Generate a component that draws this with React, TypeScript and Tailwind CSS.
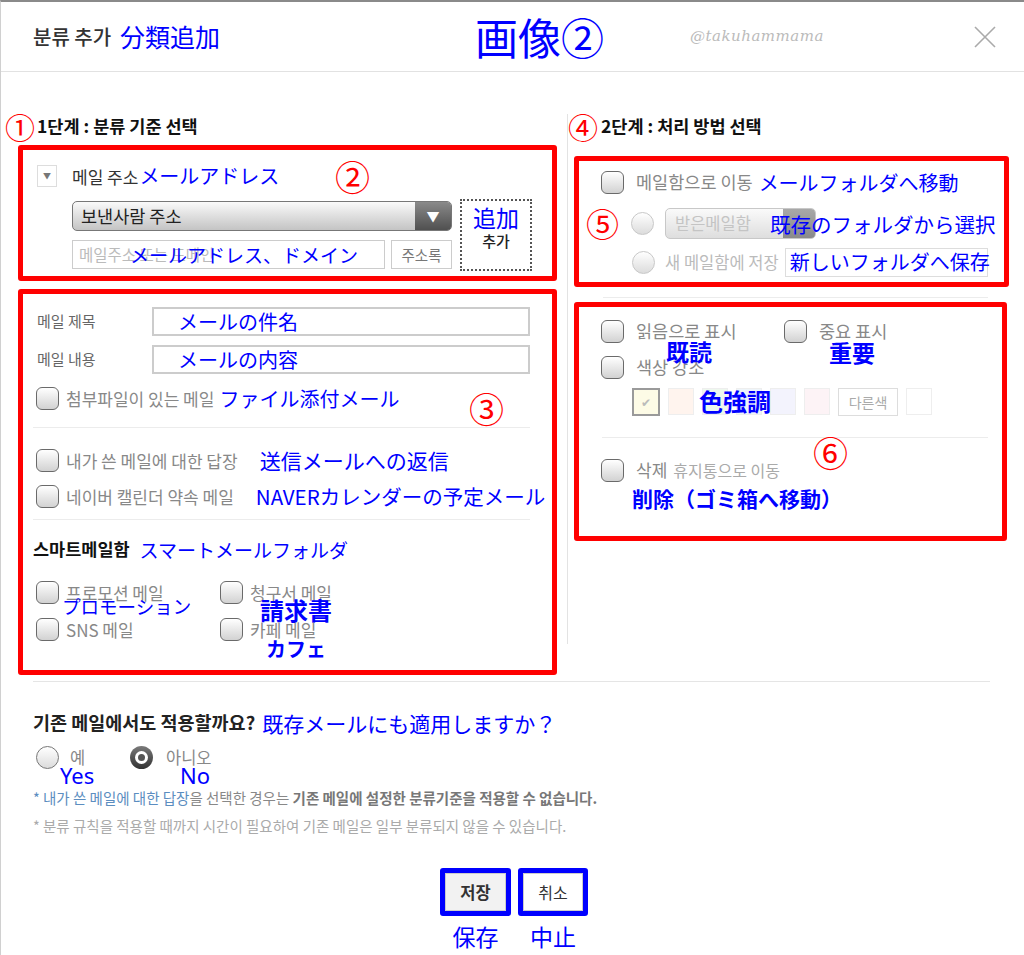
import React from 'react';

// 注釈（青い日本語テキスト）
const jp = "font-['Noto_Sans_CJK_JP',sans-serif] text-[#0000ff] leading-none whitespace-nowrap";
const red = "font-['Noto_Sans_CJK_JP',sans-serif] text-[#ff0000] leading-none";

const Checkbox = ({ light = false }: { light?: boolean }) => (
  <span
    className={`inline-block w-[23px] h-[23px] shrink-0 rounded-[6px] border-[1.5px] bg-linear-to-b from-white to-[#d2d2d2] ${
      light ? 'border-[#bdbdbd]' : 'border-[#6a6a6a]'
    }`}
  />
);

const Radio = ({ checked = false, light = false }: { checked?: boolean; light?: boolean }) =>
  checked ? (
    <span className="w-[23px] h-[23px] shrink-0 rounded-full bg-linear-to-b from-[#7a7a7a] to-[#333] flex items-center justify-center">
      <span className="w-[13px] h-[13px] rounded-full bg-white flex items-center justify-center">
        <span className="w-[7px] h-[7px] rounded-full bg-[#555]" />
      </span>
    </span>
  ) : (
    <span
      className={`inline-block w-[23px] h-[23px] shrink-0 rounded-full border-[1.5px] bg-linear-to-b from-white to-[#dcdcdc] ${
        light ? 'border-[#c8c8c8]' : 'border-[#777]'
      }`}
    />
  );

const swatches = ['bg-[#fff4ee]', 'bg-[#eef8ee]', 'bg-[#eef5fa]', 'bg-[#f3f3fd]', 'bg-[#fdf3f6]'];

export default function App() {
  return (
    <div className="w-[1024px] h-[955px] bg-white border-t-2 border-t-[#8a8a8a] border-l border-l-[#d0d0d0] overflow-hidden font-['Noto_Sans_CJK_KR','Noto_Sans_CJK_JP',sans-serif]">
      {/* ヘッダー */}
      <div className="h-[70px] border-b border-[#e2e2e2] flex items-center pl-[32px] pr-[28px]">
        <div className="w-[442px] flex items-center">
          <span className="text-[20px] text-[#333] font-medium leading-none">분류 추가</span>
          <span className={`${jp} text-[25px] ml-[9px]`}>分類追加</span>
        </div>
        <div className={`${jp} w-[215px] text-[43px]`}>画像②</div>
        <span className="text-[15px] text-[#bbb] italic tracking-[0.5px] font-['DejaVu_Serif',serif]">@takuhammama</span>
        <svg className="ml-auto" width="22" height="22" viewBox="0 0 22 22">
          <path d="M1 1L21 21M21 1L1 21" stroke="#aaa" strokeWidth="1.6" />
        </svg>
      </div>

      <div className="flex">
        {/* 1단계 */}
        <div className="w-[566px] shrink-0">
          <div className="mt-[39px] h-[30px] flex items-center pl-[4px]">
            <span className={`${red} text-[30px] w-[32px]`}>①</span>
            <span className="text-[17.5px] font-bold text-[#111]">1단계 : 분류 기준 선택</span>
          </div>

          <div className="relative mt-[4px] ml-[17px] w-[539px] h-[136px] border-[5px] border-[#ff0000] rounded-[3px] pl-[14px] pt-[15px]">
            <span className={`${red} absolute left-[312px] top-[8px] text-[35px]`}>②</span>
            <div className="flex items-center h-[22px]">
              <span className="w-[20px] h-[22px] border border-[#ddd] flex items-center justify-center text-[8px] text-[#777]">▼</span>
              <span className="ml-[15px] text-[17px] text-[#333] leading-none">메일 주소</span>
              <span className={`${jp} ml-[1px] text-[20px]`}>メールアドレス</span>
            </div>
            <div className="mt-[12px] ml-[35px] flex gap-[8px]">
              <div className="w-[380px]">
                <div className="mt-[2px] h-[30px] rounded-[5px] border border-[#777] bg-linear-to-b from-[#fafafa] to-[#c4c4c4] flex overflow-hidden">
                  <span className="flex-1 pl-[8px] flex items-center text-[17.5px] text-[#222]">보낸사람 주소</span>
                  <span className="w-[36px] bg-linear-to-b from-[#8a8a8a] to-[#505050] flex items-center justify-center text-white text-[13px]">▼</span>
                </div>
                <div className="mt-[9px] flex">
                  <div className="relative w-[313px] h-[29px] border border-[#ccc] flex items-center pl-[6px] text-[15.5px] text-[#bbb]">
                    메일주소 또는 도메인
                    <span className={`${jp} absolute left-[57px] top-[4px] text-[19px]`}>メールアドレス、ドメイン</span>
                  </div>
                  <div className="ml-[6px] w-[61px] h-[29px] border border-[#ccc] flex items-center justify-center text-[14.5px] text-[#777]">
                    주소록
                  </div>
                </div>
              </div>
              <div className="w-[72px] h-[72px] border-2 border-dotted border-[#555] flex flex-col items-center pt-[5px]">
                <span className={`${jp} text-[23px]`}>追加</span>
                <span className="mt-[4px] text-[15px] font-medium text-[#222] leading-none">추가</span>
              </div>
            </div>
          </div>

          <div className="relative mt-[8px] ml-[17px] w-[539px] h-[386px] border-[5px] border-[#ff0000] rounded-[3px] pl-[14px] pt-[13px]">
            <span className={`${red} absolute left-[446px] top-[96px] text-[35px]`}>③</span>
            <div className="flex items-center h-[29px]">
              <span className="w-[115px] text-[15px] text-[#666]">메일 제목</span>
              <div className="w-[378px] h-[29px] border-2 border-[#ccc] pl-[24px] flex items-center">
                <span className={`${jp} text-[20px]`}>メールの件名</span>
              </div>
            </div>
            <div className="mt-[9px] flex items-center h-[29px]">
              <span className="w-[115px] text-[15px] text-[#666]">메일 내용</span>
              <div className="w-[378px] h-[29px] border-2 border-[#ccc] pl-[24px] flex items-center">
                <span className={`${jp} text-[20px]`}>メールの内容</span>
              </div>
            </div>
            <div className="mt-[13px] -ml-[1px] flex items-center h-[23px]">
              <Checkbox />
              <span className="ml-[7px] text-[17px] text-[#888]">첨부파일이 있는 메일</span>
              <span className={`${jp} ml-[5px] text-[20px]`}>ファイル添付メール</span>
            </div>
            <div className="mt-[17px] -ml-[4px] w-[497px] h-px bg-[#ececec]" />
            <div className="mt-[21px] -ml-[1px] flex items-center h-[23px]">
              <Checkbox />
              <span className="ml-[7px] text-[17px] text-[#888]">내가 쓴 메일에 대한 답장</span>
              <span className={`${jp} ml-[22px] text-[21px]`}>送信メールへの返信</span>
            </div>
            <div className="mt-[13px] -ml-[1px] flex items-center h-[23px]">
              <Checkbox />
              <span className="ml-[7px] text-[17px] text-[#888]">네이버 캘린더 약속 메일</span>
              <span className={`${jp} ml-[22px] text-[20.5px]`}>NAVERカレンダーの予定メール</span>
            </div>
            <div className="mt-[11px] -ml-[4px] w-[497px] h-px bg-[#ececec]" />
            <div className="mt-[15px] -ml-[4px] flex items-center h-[28px]">
              <span className="text-[17.5px] font-bold text-[#111]">스마트메일함</span>
              <span className={`${jp} ml-[10px] text-[19px]`}>スマートメールフォルダ</span>
            </div>
            <div className="mt-[18px] -ml-[1px] grid grid-cols-[184px_184px] gap-y-[14px]">
              <div className="relative flex items-center h-[23px]">
                <Checkbox />
                <span className="ml-[7px] text-[17px] text-[#888]">프로모션 메일</span>
                <span className={`${jp} absolute left-[26px] top-[16px] text-[18.5px]`}>プロモーション</span>
              </div>
              <div className="relative flex items-center h-[23px]">
                <Checkbox />
                <span className="ml-[7px] text-[17px] text-[#888]">청구서 메일</span>
                <span className={`${jp} absolute left-[40px] top-[17px] text-[24px] font-bold`}>請求書</span>
              </div>
              <div className="relative flex items-center h-[23px]">
                <Checkbox />
                <span className="ml-[7px] text-[17px] text-[#888]">SNS 메일</span>
              </div>
              <div className="relative flex items-center h-[23px]">
                <Checkbox />
                <span className="ml-[7px] text-[17px] text-[#888]">카페 메일</span>
                <span className={`${jp} absolute left-[46px] top-[21px] text-[20px] font-bold`}>カフェ</span>
              </div>
            </div>
          </div>
        </div>

        <div className="w-px h-[530px] mt-[42px] bg-[#e3e3e3] shrink-0" />

        {/* 2단계 */}
        <div className="flex-1">
          <div className="mt-[39px] h-[30px] flex items-center">
            <span className={`${red} text-[30px] w-[33px]`}>④</span>
            <span className="text-[17.5px] font-bold text-[#111]">2단계 : 처리 방법 선택</span>
          </div>

          <div className="mt-[15px] ml-[6px] w-[435px] h-[131px] border-[5px] border-[#ff0000] rounded-[3px] pt-[10px]">
            <div className="pl-[22px] flex items-center h-[23px]">
              <Checkbox />
              <span className="ml-[12px] text-[17.5px] text-[#888]">메일함으로 이동</span>
              <span className={`${jp} ml-[6px] text-[20px]`}>メールフォルダへ移動</span>
            </div>
            <div className="mt-[14px] pl-[7px] flex items-center h-[31px]">
              <span className={`${red} text-[33px] w-[36px]`}>⑤</span>
              <span className="ml-[9px] flex">
                <Radio light />
              </span>
              <div className="relative ml-[11px] w-[151px] h-[31px] rounded-[5px] border border-[#c8c8c8] bg-linear-to-b from-[#fafafa] to-[#dedede] flex">
                <span className="flex-1 pl-[9px] flex items-center text-[16.5px] text-[#c4c4c4]">받은메일함</span>
                <span className="w-[32px] rounded-r-[4px] bg-linear-to-b from-[#a8a8a8] to-[#8a8a8a]" />
                <span className={`${jp} absolute left-[104px] top-[5px] text-[20.5px]`}>既存のフォルダから選択</span>
              </div>
            </div>
            <div className="mt-[9px] pl-[53px] flex items-center h-[28px]">
              <Radio light />
              <span className="ml-[10px] text-[16.5px] text-[#bbb]">새 메일함에 저장</span>
              <div className="ml-[6px] w-[203px] h-[29px] border border-[#ddd] flex items-center pl-[4px]">
                <span className={`${jp} text-[20px]`}>新しいフォルダへ保存</span>
              </div>
            </div>
          </div>

          <div className="mt-[10px] ml-[35px] w-[385px] h-px bg-[#ececec]" />

          <div className="relative mt-[4px] ml-[6px] w-[433px] h-[239px] border-[5px] border-[#ff0000] rounded-[3px] pl-[22px] pt-[13px]">
            <span className={`${red} absolute left-[234px] top-[127px] text-[35px]`}>⑥</span>
            <div className="flex">
              <div className="relative w-[183px] flex items-center h-[23px]">
                <Checkbox />
                <span className="ml-[12px] text-[17.5px] text-[#888]">읽음으로 표시</span>
                <span className={`${jp} absolute left-[65px] top-[20px] text-[23px] font-bold`}>既読</span>
              </div>
              <div className="relative flex items-center h-[23px]">
                <Checkbox />
                <span className="ml-[12px] text-[17.5px] text-[#888]">중요 표시</span>
                <span className={`${jp} absolute left-[45px] top-[21px] text-[23px] font-bold`}>重要</span>
              </div>
            </div>
            <div className="mt-[13px] flex items-center h-[23px]">
              <Checkbox />
              <span className="ml-[12px] text-[17.5px] text-[#888]">색상 강조</span>
            </div>
            <div className="relative mt-[9px] ml-[31px] flex gap-[8px] h-[27px]">
              <span className="w-[28px] h-[28px] border-2 border-[#9a9a9a] bg-[#fdfbe6] flex items-center justify-center text-[12px] text-[#bbb]">
                ✔
              </span>
              {swatches.map((c, i) => (
                <span key={i} className={`w-[26px] h-[27px] border border-[#eee] ${c}`} />
              ))}
              <span className="w-[60px] h-[28px] border border-[#ddd] flex items-center justify-center text-[14px] text-[#aaa]">
                다른색
              </span>
              <span className="w-[26px] h-[27px] border border-[#eee] bg-white" />
              <span className={`${jp} absolute left-[67px] top-[1px] text-[24px] font-bold`}>色強調</span>
            </div>
            <div className="mt-[22px] ml-[1px] w-[386px] h-px bg-[#ececec]" />
            <div className="mt-[20px] flex items-center h-[24px]">
              <Checkbox />
              <span className="ml-[12px] text-[17px] text-[#888]">삭제</span>
              <span className="ml-[6px] text-[16px] text-[#aaa]">휴지통으로 이동</span>
            </div>
            <div className={`${jp} mt-[6px] ml-[31px] text-[21px] font-bold`}>削除（ゴミ箱へ移動）</div>
          </div>
        </div>
      </div>

      {/* 기존 메일 적용 */}
      <div className="mt-[6px] ml-[32px] w-[957px] h-px bg-[#e5e5e5]" />
      <div className="pl-[32px]">
        <div className="mt-[27px] flex items-center h-[28px]">
          <span className="text-[18.5px] font-bold text-[#222]">기존 메일에서도 적용할까요?</span>
          <span className={`${jp} ml-[7px] text-[21px]`}>既存メールにも適用しますか？</span>
        </div>
        <div className="mt-[9px] flex items-center h-[23px]">
          <div className="relative flex items-center w-[97px] pl-[3px]">
            <Radio />
            <span className="ml-[11px] text-[16.5px] text-[#888]">예</span>
            <span className="absolute left-[27px] top-[19px] text-[22px] leading-none text-[#0000ff] font-['Noto_Sans',sans-serif]">Yes</span>
          </div>
          <div className="relative flex items-center">
            <Radio checked />
            <span className="ml-[13px] text-[16.5px] text-[#888]">아니오</span>
            <span className="absolute left-[50px] top-[19px] text-[22px] leading-none text-[#0000ff] font-['Noto_Sans',sans-serif]">No</span>
          </div>
        </div>
        <div className="mt-[20px] text-[14.5px] leading-[18px] text-[#888] whitespace-nowrap">
          <span className="text-[#5b8dc0]">* 내가 쓴 메일에 대한 답장</span>을 선택한 경우는{' '}
          <span className="font-bold text-[#777]">기존 메일에 설정한 분류기준을 적용할 수 없습니다.</span>
        </div>
        <div className="mt-[10px] text-[14.5px] leading-[18px] text-[#aaa] whitespace-nowrap">
          * 분류 규칙을 적용할 때까지 시간이 필요하여 기존 메일은 일부 분류되지 않을 수 있습니다.
        </div>
      </div>

      {/* 버튼 */}
      <div className="mt-[33px] ml-[439px] flex gap-[7px]">
        <div className="flex flex-col items-center">
          <button className="w-[71px] h-[48px] border-[5px] border-[#0000ff] rounded-[3px] p-0">
            <span className="w-full h-full border border-[#ccc] bg-[#f2f2f2] flex items-center justify-center text-[16.5px] font-bold text-[#333]">
              저장
            </span>
          </button>
          <span className={`${jp} mt-[9px] text-[23px]`}>保存</span>
        </div>
        <div className="flex flex-col items-center">
          <button className="w-[70px] h-[48px] border-[5px] border-[#0000ff] rounded-[3px] p-0">
            <span className="w-full h-full border border-[#ccc] bg-white flex items-center justify-center text-[16px] text-[#333]">
              취소
            </span>
          </button>
          <span className={`${jp} mt-[9px] text-[23px]`}>中止</span>
        </div>
      </div>
    </div>
  );
}
